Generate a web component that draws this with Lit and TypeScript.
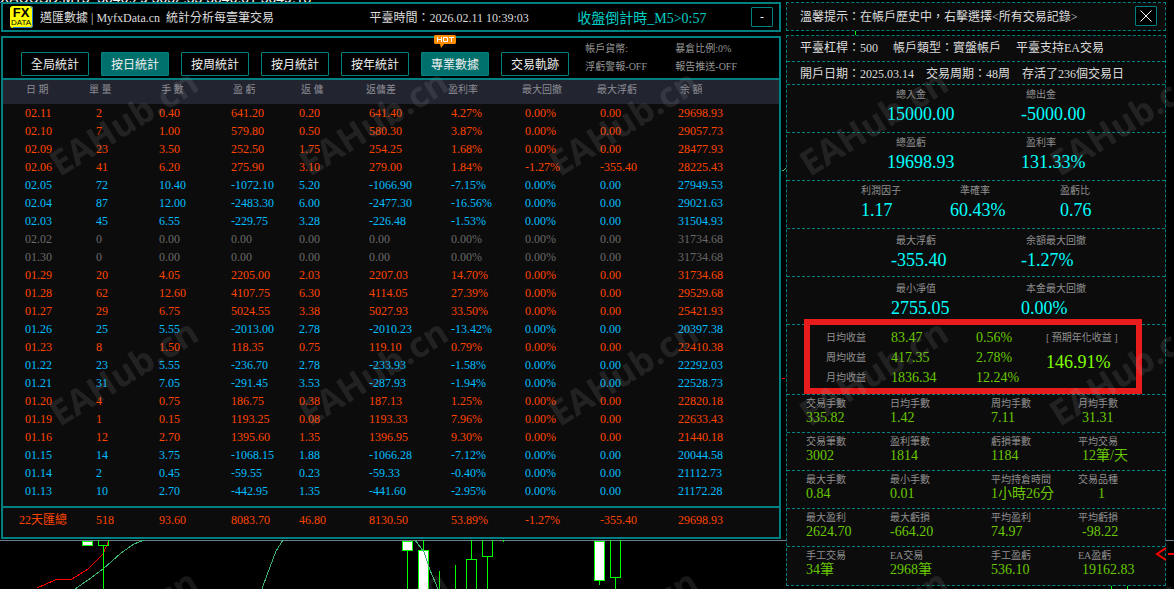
import { LitElement, html, css, svg, nothing } from "lit";
import { customElement, state } from "lit/decorators.js";
import { classMap } from "lit/directives/class-map.js";

const HEADERS = ["日 期", "單 量", "手 數", "盈 虧", "返 傭", "返傭差", "盈利率", "最大回撤", "最大浮虧", "余 額"];

const ROWS = `02.11 2 0.40 641.20 0.20 641.40 4.27% 0.00% 0.00 29698.93
02.10 7 1.00 579.80 0.50 580.30 3.87% 0.00% 0.00 29057.73
02.09 23 3.50 252.50 1.75 254.25 1.68% 0.00% 0.00 28477.93
02.06 41 6.20 275.90 3.10 279.00 1.84% -1.27% -355.40 28225.43
02.05 72 10.40 -1072.10 5.20 -1066.90 -7.15% 0.00% 0.00 27949.53
02.04 87 12.00 -2483.30 6.00 -2477.30 -16.56% 0.00% 0.00 29021.63
02.03 45 6.55 -229.75 3.28 -226.48 -1.53% 0.00% 0.00 31504.93
02.02 0 0.00 0.00 0.00 0.00 0.00% 0.00% 0.00 31734.68
01.30 0 0.00 0.00 0.00 0.00 0.00% 0.00% 0.00 31734.68
01.29 20 4.05 2205.00 2.03 2207.03 14.70% 0.00% 0.00 31734.68
01.28 62 12.60 4107.75 6.30 4114.05 27.39% 0.00% 0.00 29529.68
01.27 29 6.75 5024.55 3.38 5027.93 33.50% 0.00% 0.00 25421.93
01.26 25 5.55 -2013.00 2.78 -2010.23 -13.42% 0.00% 0.00 20397.38
01.23 8 1.50 118.35 0.75 119.10 0.79% 0.00% 0.00 22410.38
01.22 23 5.55 -236.70 2.78 -233.93 -1.58% 0.00% 0.00 22292.03
01.21 31 7.05 -291.45 3.53 -287.93 -1.94% 0.00% 0.00 22528.73
01.20 4 0.75 186.75 0.38 187.13 1.25% 0.00% 0.00 22820.18
01.19 1 0.15 1193.25 0.08 1193.33 7.96% 0.00% 0.00 22633.43
01.16 12 2.70 1395.60 1.35 1396.95 9.30% 0.00% 0.00 21440.18
01.15 14 3.75 -1068.15 1.88 -1066.28 -7.12% 0.00% 0.00 20044.58
01.14 2 0.45 -59.55 0.23 -59.33 -0.40% 0.00% 0.00 21112.73
01.13 10 2.70 -442.95 1.35 -441.60 -2.95% 0.00% 0.00 21172.28`
  .split("\n")
  .map((line) => line.trim().split(" "));

const TOTAL = ["22天匯總", "518", "93.60", "8083.70", "46.80", "8130.50", "53.89%", "-1.27%", "-355.40", "29698.93"];

const BIG: [string, string][][] = [
  [["總入金", "15000.00"], ["總出金", "-5000.00"]],
  [["總盈虧", "19698.93"], ["盈利率", "131.33%"]],
  [["利潤因子", "1.17"], ["準確率", "60.43%"], ["盈虧比", "0.76"]],
  [["最大浮虧", "-355.40"], ["余額最大回撤", "-1.27%"]],
  [["最小凈值", "2755.05"], ["本金最大回撤", "0.00%"]],
];

const INCOME = [
  ["日均收益", "83.47", "0.56%"],
  ["周均收益", "417.35", "2.78%"],
  ["月均收益", "1836.34", "12.24%"],
];

const SMALL: [string, string][][] = [
  [["交易手數", "335.82"], ["日均手數", "1.42"], ["周均手數", "7.11"], ["月均手數", "31.31"]],
  [["交易筆數", "3002"], ["盈利筆數", "1814"], ["虧損筆數", "1184"], ["平均交易", "12筆/天"]],
  [["最大手數", "0.84"], ["最小手數", "0.01"], ["平均持倉時間", "1小時26分"], ["交易品種", "1"]],
  [["最大盈利", "2624.70"], ["最大虧損", "-664.20"], ["平均盈利", "74.97"], ["平均虧損", "-98.22"]],
  [["手工交易", "34筆"], ["EA交易", "2968筆"], ["手工盈虧", "536.10"], ["EA盈虧", "19162.83"]],
];

const TABS = ["全局統計", "按日統計", "按周統計", "按月統計", "按年統計", "專業數據", "交易軌跡"];

/** Price chart that runs behind the panels. */
@customElement("price-chart")
class PriceChart extends LitElement {
  static styles = css`
    :host { display: block; }
    svg { display: block; width: 100%; height: 100%; }
    .quote { font: 14px "Liberation Sans", sans-serif; fill: #fff; }
  `;
  render() {
    return html`<svg aria-hidden="true">
      <text class="quote" x="0" y="3">XAUUSD.M15&nbsp; 5046.29 5052.55 5046.01 5049.18</text>
      <g fill="none" shape-rendering="crispEdges">
        <path d="M0 540.5H786M1166 540.5H1174" stroke="#708090" />
        <path d="M37 588L55 580L72 579L88 569L103 554L109 540" stroke="#f00" />
        <path d="M75 589L88 580L103 569L121 553L134 544L144 540" stroke="#3cb371" />
        <path d="M262 589L267 575L276 551L283 540" stroke="#3cb371" />
        <path d="M782 171L787 168" stroke="#3cb371" />
        <path d="M782 378H785" stroke="#f00" />
        <g stroke="#0f0">
          <path d="M103.5 545V589M407.5 550V589M423.5 540V550M439.5 571V589M455.5 565V589M471.5 540V559M487.5 556V589M503.5 540V542M599.5 580V585M615.5 577V589M1111.5 586V589M1127.5 586V589M855.5 29V35" />
          <path d="M98.5 540V545.5H108.5V540M466.5 589V559.5H476.5V589M482.5 540V556.5H492.5V540M610.5 540V577.5H620.5V540" />
          <path d="M82.5 541V545.5H92.5V541ZM402.5 541V550.5H412.5V541ZM418.5 589V550.5H428.5V589ZM594.5 541V580.5H604.5V541Z" fill="#fff" />
        </g>
        <path d="M415 540L424 552L430 570L438 589" stroke="#3cb371" />
      </g>
    </svg>`;
  }
}

@customElement("stat-table")
class StatTable extends LitElement {
  static styles = css`
    :host { display: block; }
    table { width: 100%; table-layout: fixed; border-collapse: collapse; background: #0c0c0c; }
    th, td { padding: 0 0 0 8px; text-align: left; font-weight: 400; white-space: nowrap; }
    th { height: 24px; padding-bottom: 4px; box-sizing: border-box; font-size: 10px; line-height: 20px; color: #8c8c94; background: #222430; }
    th.wide { padding-left: 5px; }
    th.short { padding-left: 10px; }
    th:nth-child(2) { padding-left: 1px; }
    td { height: 18px; font-size: 12px; line-height: 18px; }
    th:first-child { padding-left: 23px; }
    td:first-child { padding-left: 22px; }
    .c0 { width: 85px; } .c1 { width: 63px; } .c2 { width: 72px; } .c3 { width: 68px; } .c4 { width: 70px; }
    .c5 { width: 82px; } .c6 { width: 74px; } .c7 { width: 75px; } .c8 { width: 78px; } .c9 { width: 109px; }
    .gain { color: #ff4500; }
    .loss { color: #00bfff; }
    .idle { color: #696969; }
    .gap td { height: 6px; line-height: 6px; }
    tfoot { border-top: 2px solid #008080; }
    tfoot td { height: 30px; padding-bottom: 6px; box-sizing: border-box; }
    tfoot td:first-child { padding-left: 16px; }
  `;
  private tone(row: string[]) {
    const value = parseFloat(row[3]);
    return value > 0 ? "gain" : value < 0 ? "loss" : "idle";
  }
  render() {
    return html`<table>
      <colgroup>${HEADERS.map((_, i) => html`<col class="c${i}" />`)}</colgroup>
      <thead><tr>${HEADERS.map((h) => html`<th scope="col" class=${h.includes(" ") ? "short" : "wide"}>${h}</th>`)}</tr></thead>
      <tbody>
        ${ROWS.map((r) => html`<tr class=${this.tone(r)}>${r.map((c) => html`<td>${c}</td>`)}</tr>`)}
        <tr class="gap"><td colspan="10"></td></tr>
      </tbody>
      <tfoot><tr class="gain">${TOTAL.map((c) => html`<td>${c}</td>`)}</tr></tfoot>
    </table>`;
  }
}

@customElement("account-panel")
class AccountPanel extends LitElement {
  static styles = css`
    :host { display: flex; flex-direction: column; gap: 4px; min-width: 0; }
    .box { border: 1px dashed #008080; background: #0c0c0c; color: #dcdcdc; font-size: 12px; white-space: nowrap; }
    .tip { display: flex; justify-content: space-between; align-items: center; box-sizing: border-box; height: 29px; padding: 0 8px 2px 13px; }
    .close { width: 22px; height: 20px; padding: 0; display: grid; place-items: center; border: 1px solid #008080; border-radius: 1px; background: #000; color: #fff; }
    .line { display: flex; gap: 15px; padding: 0 13px; height: 25px; line-height: 24px; border-bottom: 1px dashed #008080; }
    .line.tight { gap: 12px; height: 22px; }
    .row { display: grid; box-sizing: border-box; border-bottom: 1px dashed #008080; }
    .label { color: #8f8f8f; font-size: 10px; line-height: 14px; }
    .big { height: 48px; padding-top: 3px; grid-template-columns: 100fr 134fr 144fr; }
    .big.three { grid-template-columns: 74fr 89fr 110fr 105fr; }
    .big .item:first-child { grid-column: 2; }
    .big .item:first-child .label { padding-left: 9px; }
    .big .item:last-child .label { padding-left: 5px; }
    .big.three .item .label { padding-left: 0; }
    .big.three .item:nth-child(2) .label { padding-left: 10px; }
    .big.low { padding-top: 5px; }
    .big.low .item:first-child .value { padding-left: 4px; }
    .big .value { color: #0ff; font-size: 18px; line-height: 24px; }
    .income { position: relative; height: 70px; padding: 3px 0 6px; grid-template-columns: 39fr 65fr 85fr 70fr 119fr; grid-auto-rows: 20px; line-height: 20px; }
    .income .label { grid-column: 2; line-height: 20px; }
    .income .value, .small .value { color: #69c800; font-size: 14px; }
    .yearly { grid-column: 5; grid-row: 1 / 4; }
    .yearly .value { color: #7fff00; font-size: 18px; line-height: 28px; }
    .frame { position: absolute; inset: -6px 23px 0 17px; border: 6px solid #e81c1c; }
    .small { height: 38px; padding-top: 2px; grid-template-columns: 19fr 84fr 101fr 87fr 87fr; }
    .small:last-child { border-bottom: 0; }
    .small .item:first-child { grid-column: 2; }
    .small .value { line-height: 14px; }
    .small .item:last-child .value { padding-left: 4px; }
    .small .item:last-child .value.count { padding-left: 20px; }
  `;
  render() {
    return html`
      <div class="box tip">
        <span>溫馨提示：在帳戶歷史中，右擊選擇&lt;所有交易記錄&gt;</span>
        <button class="close" aria-label="關閉">
          <svg width="12" height="12" stroke="currentColor" aria-hidden="true"><path d="M.5 .5L11.5 11.5M11.5 .5L.5 11.5" /></svg>
        </button>
      </div>
      <div class="box">
        <div class="line"><span>平臺杠桿：500</span><span>帳戶類型：實盤帳戶</span><span>平臺支持EA交易</span></div>
        <div class="line tight"><span>開戶日期：2025.03.14</span><span>交易周期：48周</span><span>存活了236個交易日</span></div>
        ${BIG.map((row, i) => html`<div class=${classMap({ row: true, big: true, three: row.length === 3, low: i > 2 })}>
          ${row.map(([l, v]) => html`<div class="item"><div class="label">${l}</div><div class="value">${v}</div></div>`)}
        </div>`)}
        <div class="row income">
          ${INCOME.map(([l, a, b]) => html`<span class="label">${l}</span><span class="value">${a}</span><span class="value">${b}</span>`)}
          <div class="yearly"><div class="label">[ 預期年化收益 ]</div><div class="value">146.91%</div></div>
          <div class="frame"></div>
        </div>
        ${SMALL.map((row) => html`<div class="row small">
          ${row.map(([l, v]) => html`<div class="item"><div class="label">${l}</div><div class=${classMap({ value: true, count: v.length === 1 })}>${v}</div></div>`)}
        </div>`)}
      </div>`;
  }
}

@customElement("app-root")
class AppRoot extends LitElement {
  static styles = css`
    :host { display: block; position: relative; box-sizing: border-box; min-height: 100vh; padding: 2px 8px 3px 1px; overflow: hidden; background: #000; color: #dcdcdc; font-family: "Liberation Serif", "Noto Sans CJK TC", serif; font-size: 12px; }
    button { font-family: inherit; font-size: 12px; color: #eee; cursor: pointer; }
    .chart, .watermark { position: absolute; inset: 0; width: 100%; height: 100%; }
    .watermark, .arrow { pointer-events: none; }
    .watermark text { font: 700 35px "Open Sans", sans-serif; fill: #a0a0a0; fill-opacity: 0.15; }
    .arrow { position: absolute; right: 0; top: 547px; }
    .page { position: relative; display: grid; grid-template-columns: 780fr 380fr; gap: 5px; align-items: start; }
    .left { display: flex; flex-direction: column; gap: 4px; min-width: 0; }
    .title { display: grid; grid-template-columns: 24px 324fr 202fr 168fr 22px; align-items: center; column-gap: 6px; box-sizing: border-box; height: 30px; padding: 0 6px 0 7px; border: 2px solid #008080; background: #000; white-space: nowrap; }
    .countdown { font-size: 14px; color: #00d0c8; }
    .fold { height: 20px; padding: 0; border: 1px solid #008080; border-radius: 1px; background: #000; }
    .board { border: 2px solid #008080; background: #000; }
    .tools { display: flex; justify-content: space-between; height: 40px; padding: 0 42px 0 18px; border-bottom: 2px solid #008080; }
    .tabs { display: flex; align-items: flex-end; gap: 12px; padding-bottom: 2px; }
    .tab { position: relative; width: 68px; height: 24px; padding: 0; border: 1px solid #008080; border-radius: 1px; background: #000; white-space: nowrap; }
    .tab.active { background: #00706c; }
    .hot { position: absolute; left: 12px; top: -18px; }
    .notes { display: grid; grid-template-columns: 90px auto; align-content: center; font-size: 10px; line-height: 18px; color: #959595; white-space: nowrap; }
  `;

  @state() private folded = false;

  private hot() {
    return html`<svg class="hot" width="22" height="13" aria-hidden="true">
      <path d="M1 0H21L22 1V8L21 9H10L7 13L6 9H1L0 8V1Z" fill="#ff8c00" />
      <path d="M3.5 2V7M3.5 4.5H7.5M7.5 2V7M9.5 2.5H13.5V6.5H9.5ZM15 2.5H20M17.5 2.5V7" fill="none" stroke="#fff" />
    </svg>`;
  }

  render() {
    return html`
      <price-chart class="chart"></price-chart>
      <main class="page">
        <section class="left">
          <header class="title">
            <svg width="24" height="22" aria-hidden="true">
              <rect width="23" height="22" rx="3" fill="#ff0" />
              <path d="M20 .5Q22.5 .5 22.5 3V19Q22.5 21.5 20 21.5H3" fill="none" stroke="#1e78d2" />
              <text x="11" y="11" text-anchor="middle" font-family="Liberation Sans" font-weight="700" font-size="13">FX</text>
              <text x="11" y="19" text-anchor="middle" font-family="Liberation Sans" font-size="8">DATA</text>
            </svg>
            <span>邁匯數據 | MyfxData.cn&nbsp; 統計分析每壹筆交易</span>
            <span>平臺時間：2026.02.11 10:39:03</span>
            <span class="countdown">收盤倒計時_M5&gt;0:57</span>
            <button class="fold" aria-label="收起" @click=${() => (this.folded = !this.folded)}>-</button>
          </header>
          ${this.folded ? nothing : html`<div class="board">
            <div class="tools">
              <nav class="tabs">
                ${TABS.map((t, i) => html`<button class=${classMap({ tab: true, active: i === 1 || i === 5 })}>${t}${i === 5 ? this.hot() : nothing}</button>`)}
              </nav>
              <div class="notes"><span>帳戶貨幣:</span><span>暴倉比例:0%</span><span>浮虧警報-OFF</span><span>報告推送-OFF</span></div>
            </div>
            <stat-table></stat-table>
          </div>`}
        </section>
        <account-panel></account-panel>
      </main>
      <svg class="arrow" width="19" height="14" aria-hidden="true"><path d="M11 1L2 7L11 13M13 7H19" fill="none" stroke="#f00" stroke-width="2" /></svg>
      <svg class="watermark" aria-hidden="true">
        <defs>
          <pattern id="mark" width="250" height="250" patternUnits="userSpaceOnUse">
            ${svg`<text transform="translate(124 123) rotate(-32)" text-anchor="middle" y="12">EAHub.cn</text>`}
          </pattern>
        </defs>
        <rect width="100%" height="100%" fill="url(#mark)" />
      </svg>`;
  }
}
